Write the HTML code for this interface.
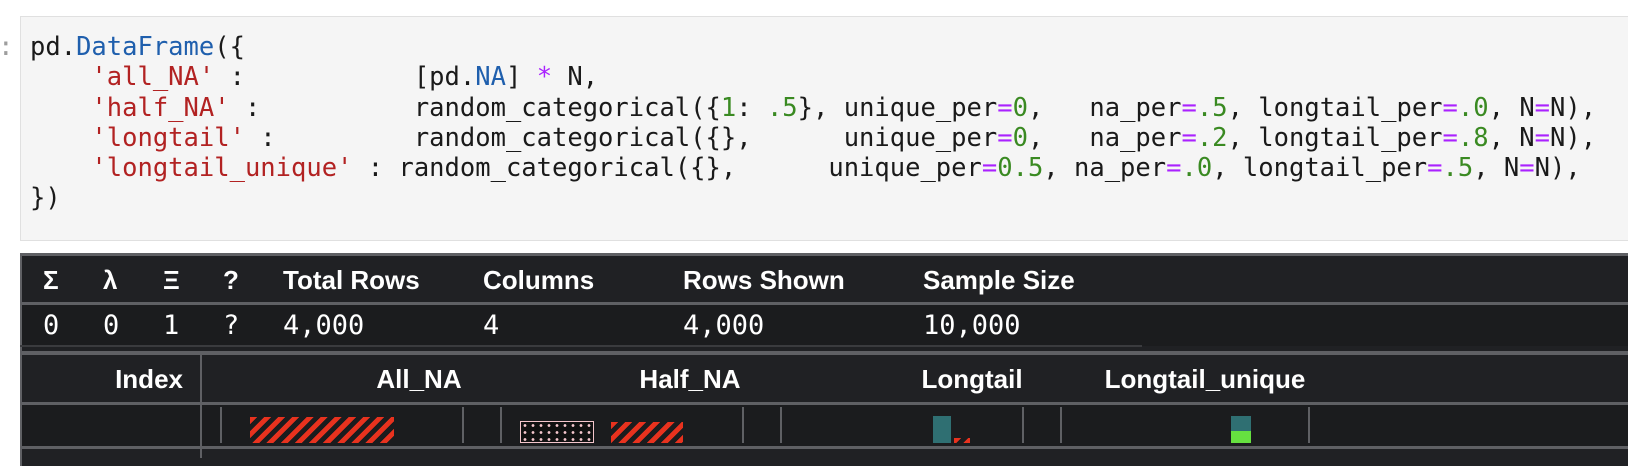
<!DOCTYPE html>
<html><head><meta charset="utf-8"><style>
body{margin:0;width:1628px;height:458px;background:#fff;position:relative;overflow:hidden;font-family:"Liberation Sans",sans-serif}
.code{position:absolute;left:20px;top:16px;width:1620px;height:225px;background:#f5f5f5;border:1px solid #e0e0e0;box-sizing:border-box}
pre{position:absolute;left:30px;top:32px;margin:0;font-family:"DejaVu Sans Mono",monospace;font-size:25.5px;line-height:30.3px;color:#1a1a1a}
.s{color:#b22222}.b{color:#1f5fad}.p{color:#aa22ff}.g{color:#3a8a22}
.prompt{position:absolute;left:-2px;top:32px;font-family:"DejaVu Sans Mono",monospace;font-size:26px;line-height:30px;color:#9e9e9e}
.dark{position:absolute;left:20px;top:253px;width:1620px;height:210px;background:#202124;border-top:3px solid #5f6064;border-left:2px solid #5f6064}
.t{position:absolute;color:#fff;white-space:nowrap}
.h{font-weight:bold;font-size:26px;top:265px}
.v{font-family:"DejaVu Sans Mono",monospace;font-size:27px;top:310px}
.h2{font-weight:bold;font-size:26px;top:364px}
.ln{position:absolute;background:#5f6064}
.vl{position:absolute;width:2px;background:#5f6064;top:407px;height:36px}
.red{position:absolute;background:repeating-linear-gradient(135deg,#e8321e 0 5px,transparent 5px 10px)}
</style></head><body>
<div class="prompt">:</div>
<div class="code"></div>
<pre>pd.<span class="b">DataFrame</span>({
    <span class="s">'all_NA'</span> :           [pd.<span class="b">NA</span>] <span class="p">*</span> N,
    <span class="s">'half_NA'</span> :          random_categorical({<span class="g">1</span>: <span class="g">.5</span>}, unique_per<span class="p">=</span><span class="g">0</span>,   na_per<span class="p">=</span><span class="g">.5</span>, longtail_per<span class="p">=</span><span class="g">.0</span>, N<span class="p">=</span>N),
    <span class="s">'longtail'</span> :         random_categorical({},      unique_per<span class="p">=</span><span class="g">0</span>,   na_per<span class="p">=</span><span class="g">.2</span>, longtail_per<span class="p">=</span><span class="g">.8</span>, N<span class="p">=</span>N),
    <span class="s">'longtail_unique'</span> : random_categorical({},      unique_per<span class="p">=</span><span class="g">0.5</span>, na_per<span class="p">=</span><span class="g">.0</span>, longtail_per<span class="p">=</span><span class="g">.5</span>, N<span class="p">=</span>N),
})</pre>
<div class="dark"></div>
<div class="ln" style="left:20px;top:302px;width:1608px;height:3px"></div>
<div style="position:absolute;left:22px;top:305px;width:1606px;height:41px;background:#1b1c1e"></div>
<div class="ln" style="left:20px;top:345px;width:1122px;height:2px;background:#3a3b3e"></div>
<div class="ln" style="left:20px;top:351px;width:1608px;height:4px"></div>
<div class="ln" style="left:20px;top:402px;width:1608px;height:3px"></div>
<div style="position:absolute;left:22px;top:405px;width:1606px;height:41px;background:#1b1c1e"></div>
<div class="ln" style="left:20px;top:446px;width:1608px;height:3px"></div>
<div class="ln" style="left:200px;top:355px;width:2px;height:103px"></div>

<div class="t h" style="left:43px">Σ</div>
<div class="t h" style="left:103px">λ</div>
<div class="t h" style="left:163px">Ξ</div>
<div class="t h" style="left:223px">?</div>
<div class="t h" style="left:283px">Total Rows</div>
<div class="t h" style="left:483px">Columns</div>
<div class="t h" style="left:683px">Rows Shown</div>
<div class="t h" style="left:923px">Sample Size</div>

<div class="t v" style="left:43px">0</div>
<div class="t v" style="left:103px">0</div>
<div class="t v" style="left:163px">1</div>
<div class="t v" style="left:223px">?</div>
<div class="t v" style="left:283px">4,000</div>
<div class="t v" style="left:483px">4</div>
<div class="t v" style="left:683px">4,000</div>
<div class="t v" style="left:923px">10,000</div>

<div class="t h2" style="right:1445px">Index</div>
<div class="t h2" style="left:419px;transform:translateX(-50%)">All_NA</div>
<div class="t h2" style="left:690px;transform:translateX(-50%)">Half_NA</div>
<div class="t h2" style="left:972px;transform:translateX(-50%)">Longtail</div>
<div class="t h2" style="left:1205px;transform:translateX(-50%)">Longtail_unique</div>

<div class="vl" style="left:220px"></div>
<div class="vl" style="left:462px"></div>
<div class="vl" style="left:500px"></div>
<div class="vl" style="left:742px"></div>
<div class="vl" style="left:780px"></div>
<div class="vl" style="left:1022px"></div>
<div class="vl" style="left:1060px"></div>
<div class="vl" style="left:1308px"></div>

<div class="red" style="left:250px;top:417px;width:144px;height:26px"></div>
<div style="position:absolute;left:520px;top:421px;width:74px;height:22px;box-sizing:border-box;border:1px solid #f4c6cc;background:radial-gradient(circle,#f4c6cc 1.2px,transparent 1.6px) 0 0/8px 7px,#111"></div>
<div class="red" style="left:611px;top:422px;width:72px;height:21px"></div>
<div style="position:absolute;left:933px;top:416px;width:18px;height:27px;background:#2f6f72"></div>
<div class="red" style="left:954px;top:438px;width:16px;height:5px"></div>
<div style="position:absolute;left:1231px;top:416px;width:20px;height:15px;background:#2f6f72"></div>
<div style="position:absolute;left:1231px;top:431px;width:20px;height:12px;background:#66e040"></div>
</body></html>
